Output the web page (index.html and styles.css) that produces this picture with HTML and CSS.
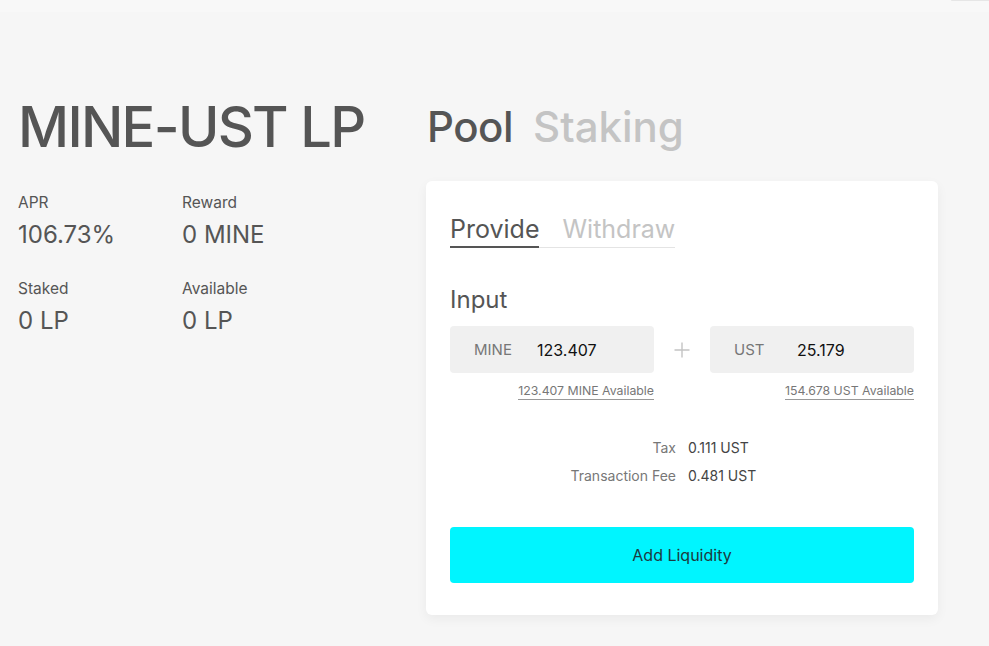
FILE: index.html
```html
<!DOCTYPE html>
<html>
<head>
<meta charset="utf-8">
<link rel="stylesheet" href="styles.css">
</head>
<body>
<div class="topbar"><div class="topbar-tab"></div></div>
<main class="page">
  <section class="info">
    <h1 class="title">MINE-UST LP</h1>
    <div class="stats">
      <div class="stat"><div class="stat-label">APR</div><div class="stat-value">106.73%</div></div>
      <div class="stat"><div class="stat-label">Reward</div><div class="stat-value">0 MINE</div></div>
      <div class="stat"><div class="stat-label">Staked</div><div class="stat-value">0 LP</div></div>
      <div class="stat"><div class="stat-label">Available</div><div class="stat-value">0 LP</div></div>
    </div>
  </section>
  <section class="panel">
    <nav class="main-tabs">
      <span class="main-tab active">Pool</span>
      <span class="main-tab">Staking</span>
    </nav>
    <div class="card">
      <div class="sub-tabs">
        <span class="sub-tab active">Provide</span>
        <span class="sub-tab">Withdraw</span>
      </div>
      <h2 class="input-title">Input</h2>
      <div class="inputs">
        <div class="field">
          <div class="field-box"><span class="field-unit">MINE</span><span class="field-value">123.407</span></div>
          <div class="field-avail"><span>123.407 MINE Available</span></div>
        </div>
        <div class="plus">
          <svg width="16" height="16" viewBox="0 0 16 16"><path d="M8 0.5V15.5M0.5 8H15.5" stroke="#c4c4c4" stroke-width="1.4" fill="none"/></svg>
        </div>
        <div class="field">
          <div class="field-box"><span class="field-unit">UST</span><span class="field-value">25.179</span></div>
          <div class="field-avail"><span>154.678 UST Available</span></div>
        </div>
      </div>
      <dl class="fees">
        <div class="fee-row"><dt>Tax</dt><dd>0.111 UST</dd></div>
        <div class="fee-row"><dt>Transaction Fee</dt><dd>0.481 UST</dd></div>
      </dl>
      <button class="submit">Add Liquidity</button>
    </div>
  </section>
</main>
</body>
</html>
```
FILE: styles.css
```css
* { box-sizing: border-box; }
html, body { margin: 0; padding: 0; }
body {
  background: #f6f6f6;
  font-family: Inter, "Noto Sans", sans-serif;
  color: #555555;
  width: 989px;
  height: 646px;
  overflow: hidden;
}
.topbar {
  height: 12px;
  background: #f8f8f8;
  display: flex;
  justify-content: flex-end;
}
.topbar-tab {
  width: 38px;
  height: 1px;
  background: #e6e6e6;
  border-radius: 0 0 0 2px;
}
.page {
  display: flex;
  padding: 81px 0 0 18px;
}
.info { width: 408px; }
.title {
  margin: 0;
  font-size: 56px;
  font-weight: 500;
  line-height: 68px;
  letter-spacing: -1.7px;
  color: #555555;
}
.stats {
  margin-top: 32px;
  display: grid;
  grid-template-columns: 164px 164px;
  row-gap: 29px;
}
.stat-label {
  font-size: 15.5px;
  line-height: 20px;
  color: #555555;
}
.stat-value {
  margin-top: 7px;
  font-size: 24px;
  line-height: 30px;
  color: #555555;
}
.panel { width: 512px; }
.main-tabs {
  display: flex;
  gap: 20px;
  padding-left: 1px;
  height: 88px;
  align-items: flex-start;
}
.main-tab {
  font-size: 42px;
  font-weight: 500;
  line-height: 68px;
  color: #c4c4c4;
}
.main-tab.active { color: #555555; letter-spacing: -0.5px; }
.card {
  background: #ffffff;
  border-radius: 6px;
  box-shadow: 0 4px 12px rgba(0, 0, 0, 0.05);
  padding: 30px 24px 32px;
}
.sub-tabs {
  display: inline-flex;
  border-bottom: 1px solid #e4e4e4;
}
.sub-tab {
  font-size: 25px;
  line-height: 36px;
  color: #c4c4c4;
  padding-left: 23px;
}
.sub-tab.active {
  padding-left: 0;
  color: #555555;
  box-shadow: inset 0 -2px 0 #555555;
  margin-bottom: -1px;
  padding-bottom: 1px;
}
.input-title {
  margin: 37px 0 0;
  font-size: 24px;
  font-weight: 400;
  line-height: 30px;
  color: #555555;
}
.inputs {
  margin-top: 11px;
  display: flex;
  align-items: flex-start;
}
.field { width: 204px; }
.field-box {
  height: 47px;
  background: #f0f0f0;
  border-radius: 4px;
  display: flex;
  align-items: center;
  padding-left: 24px;
  font-size: 15px;
}
.field-unit { color: #777777; width: 63px; }
.field-value { color: #111111; font-size: 16px; }
.field-avail {
  text-align: right;
  margin-top: 10px;
  font-size: 12.3px;
  line-height: 16px;
  color: #777777;
}
.field-avail span { border-bottom: 1px solid #999999; padding-bottom: 1px; }
.plus {
  width: 56px;
  height: 47px;
  display: flex;
  align-items: center;
  justify-content: center;
}
.fees {
  margin: 40px 0 0;
  display: flex;
  flex-direction: column;
  gap: 10px;
}
.fee-row {
  display: grid;
  grid-template-columns: 226px auto;
  column-gap: 12px;
  font-size: 14px;
  line-height: 18px;
}
.fee-row dt { text-align: right; color: #777777; }
.fee-row dd { margin: 0; color: #444444; }
.submit {
  margin-top: 42px;
  width: 100%;
  height: 56px;
  border: none;
  border-radius: 4px;
  background: #00f5ff;
  font-family: Inter, "Noto Sans", sans-serif;
  font-size: 16px;
  color: #1c3a40;
  display: block;
}
```
